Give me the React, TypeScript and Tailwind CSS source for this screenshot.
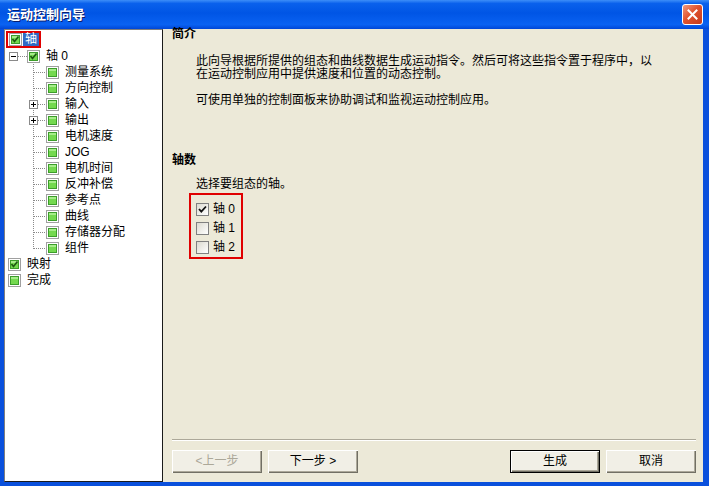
import React from "react";

function TreeCheck({ checked }: { checked?: boolean }) {
  return (
    <svg width="13" height="13" viewBox="0 0 13 13" className="shrink-0">
      <rect x="0.5" y="0.5" width="12" height="12" fill="#ffffff" stroke="#a0a0a0" />
      <rect x="2.5" y="2.5" width="8" height="8" fill="#74d94f" stroke="#3c9d2a" />
      <rect x="3" y="3" width="7" height="2" fill="#a6ec8a" />
      {checked && (
        <path d="M3.5 6 L5.5 8.5 L9.5 3.5" stroke="#1d5a12" strokeWidth="1.7" fill="none" />
      )}
    </svg>
  );
}

function ChildConnector({ last, plus }: { last?: boolean; plus?: boolean }) {
  return (
    <svg width="41" height="16" viewBox="0 0 41 16" className="shrink-0" shapeRendering="crispEdges">
      <line x1="28.5" y1="0" x2="28.5" y2={last ? 9 : 16} stroke="#8a8a8a" strokeDasharray="1 1" />
      <line x1="29" y1="8.5" x2="41" y2="8.5" stroke="#8a8a8a" strokeDasharray="1 1" />
      {plus && (
        <g>
          <rect x="24.5" y="4.5" width="8" height="8" fill="#ffffff" stroke="#8a8a8a" />
          <line x1="26" y1="8.5" x2="31" y2="8.5" stroke="#000" />
          <line x1="28.5" y1="6" x2="28.5" y2="11" stroke="#000" />
        </g>
      )}
    </svg>
  );
}

function MinusConnector() {
  return (
    <svg width="22" height="16" viewBox="0 0 22 16" className="shrink-0" shapeRendering="crispEdges">
      <line x1="13" y1="8.5" x2="22" y2="8.5" stroke="#8a8a8a" strokeDasharray="1 1" />
      <rect x="4.5" y="4.5" width="8" height="8" fill="#ffffff" stroke="#8a8a8a" />
      <line x1="6" y1="8.5" x2="11" y2="8.5" stroke="#000" />
    </svg>
  );
}

function Check({ checked }: { checked?: boolean }) {
  return (
    <div className="w-[13px] h-[13px] shrink-0 border border-[#808080] bg-[linear-gradient(135deg,#dcdad0,#ffffff)] flex items-center justify-center">
      {checked && (
        <svg width="9" height="9" viewBox="0 0 9 9">
          <path d="M1 4 L3.3 6.6 L8 1.5" stroke="#111" strokeWidth="1.8" fill="none" />
        </svg>
      )}
    </div>
  );
}

const children = [
  { t: "测量系统" },
  { t: "方向控制" },
  { t: "输入", plus: true },
  { t: "输出", plus: true },
  { t: "电机速度" },
  { t: "JOG" },
  { t: "电机时间" },
  { t: "反冲补偿" },
  { t: "参考点" },
  { t: "曲线" },
  { t: "存储器分配" },
  { t: "组件" },
];

function Btn({
  children,
  disabled,
  def,
}: {
  children: React.ReactNode;
  disabled?: boolean;
  def?: boolean;
}) {
  return (
    <div
      className={
        def
          ? "w-[90px] h-[23px] border border-black bg-[#f1efe6] shadow-[inset_1px_1px_0_#ffffff,inset_-1px_-1px_0_#716f64,inset_-2px_-2px_0_#aca899] flex items-center justify-center text-[12px] text-black"
          : disabled
          ? "w-[90px] h-[23px] bg-[#f1efe6] shadow-[inset_1px_1px_0_#ffffff,inset_-1px_-1px_0_#716f64,inset_-2px_-2px_0_#aca899] flex items-center justify-center text-[12px] text-[#aca899]"
          : "w-[90px] h-[23px] bg-[#f1efe6] shadow-[inset_1px_1px_0_#ffffff,inset_-1px_-1px_0_#716f64,inset_-2px_-2px_0_#aca899] flex items-center justify-center text-[12px] text-black"
      }
    >
      {children}
    </div>
  );
}

export default function App() {
  return (
    <div className="w-[709px] h-[486px] flex flex-col bg-[#0a50dc] font-['Liberation_Sans','Noto_Sans_CJK_SC',sans-serif] text-[12px] leading-[13px] text-black overflow-hidden">
      {/* Title bar */}
      <div className="h-[29px] shrink-0 flex items-center justify-between pl-[7px] pr-[6px] bg-[linear-gradient(180deg,#3d8ef8_0%,#0a61ec_12%,#0055e5_45%,#0a62f2_85%,#0046d6_100%)]">
        <span className="text-white font-bold text-[13px] leading-[14px] [text-shadow:1px_1px_0_#0a1e6e]">
          运动控制向导
        </span>
        <div className="w-[21px] h-[21px] rounded-[3px] border border-white bg-[linear-gradient(135deg,#f19a7e,#e0532f_45%,#c63a1c)] flex items-center justify-center">
          <svg width="11" height="11" viewBox="0 0 11 11">
            <path d="M1.5 1.5 L9.5 9.5 M9.5 1.5 L1.5 9.5" stroke="#ffffff" strokeWidth="2" strokeLinecap="square" />
          </svg>
        </div>
      </div>

      {/* Body */}
      <div className="flex-1 flex pl-[4px] pr-[6px] pb-[4px] min-h-0">
        {/* Tree */}
        <div className="w-[159px] shrink-0 bg-white border-l border-t border-l-[#7f7f7f] border-t-[#7f7f7f] border-r border-b border-r-[#1a1a1a] border-b-[#1a1a1a] flex flex-col">
          <div className="h-[18px] flex items-start">
            <div className="ml-[1px] mt-[1px] w-[35px] h-[17px] border-2 border-[#e00000] flex items-center">
              <div className="ml-[1px]">
                <TreeCheck checked />
              </div>
              <span className="ml-[1px] h-[13px] px-[2px] bg-[#316ac5] text-white leading-[13px]">轴</span>
            </div>
          </div>
          <div className="h-[16px] flex items-center">
            <MinusConnector />
            <TreeCheck checked />
            <span className="ml-[6px]">轴 0</span>
          </div>
          {children.map((c, i) => (
            <div key={c.t} className="h-[16px] flex items-center">
              <ChildConnector plus={c.plus} last={i === children.length - 1} />
              <TreeCheck />
              <span className="ml-[6px]">{c.t}</span>
            </div>
          ))}
          <div className="h-[16px] flex items-center pl-[3px]">
            <TreeCheck checked />
            <span className="ml-[6px]">映射</span>
          </div>
          <div className="h-[16px] flex items-center pl-[3px]">
            <TreeCheck />
            <span className="ml-[6px]">完成</span>
          </div>
        </div>

        {/* Right panel */}
        <div className="flex-1 bg-[#ece9d8] flex flex-col pl-[9px] pr-[7px] pb-[9px]">
          <div className="font-bold -mt-[1px] leading-[13px]">简介</div>
          <div className="ml-[24px] mt-[14px]">
            此向导根据所提供的组态和曲线数据生成运动指令。然后可将这些指令置于程序中，以
            <br />
            在运动控制应用中提供速度和位置的动态控制。
          </div>
          <div className="ml-[24px] mt-[13px]">可使用单独的控制面板来协助调试和监视运动控制应用。</div>

          <div className="font-bold mt-[47px]">轴数</div>
          <div className="ml-[24px] mt-[11px]">选择要组态的轴。</div>
          <div className="ml-[17px] mt-[2px] w-[54px] border-2 border-[#e00000] pt-[5px] pl-[5px] flex flex-col">
            {["轴 0", "轴 1", "轴 2"].map((t, i) => (
              <div key={t} className="h-[19px] flex items-center">
                <Check checked={i === 0} />
                <span className="ml-[4px]">{t}</span>
              </div>
            ))}
          </div>

          <div className="flex-1" />
          <div className="h-[2px] border-t border-t-[#aca899] border-b border-b-white" />
          <div className="mt-[9px] flex items-center">
            <Btn disabled>&lt;上一步</Btn>
            <div className="ml-[6px]">
              <Btn>下一步 &gt;</Btn>
            </div>
            <div className="flex-1" />
            <Btn def>生成</Btn>
            <div className="ml-[6px]">
              <Btn>取消</Btn>
            </div>
          </div>
        </div>
      </div>
    </div>
  );
}
